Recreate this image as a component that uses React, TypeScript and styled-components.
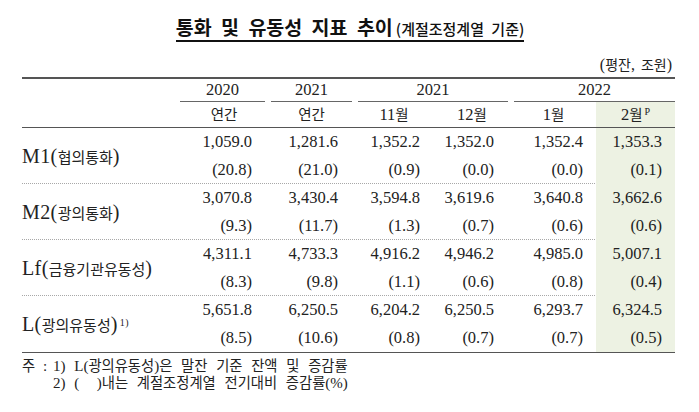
import React from "react";
import styled, { createGlobalStyle } from "styled-components";

const GlobalStyle = createGlobalStyle`
  html, body { margin: 0; padding: 0; background: #ffffff; }
  body {
    font-family: "Liberation Serif", "Noto Sans CJK KR", serif;
    color: #222222;
  }
`;

const HANGUL = /([\u1100-\u11FF\u3130-\u318F\uAC00-\uD7AF]+)/;

const Hangul = styled.span`
  font-family: "Noto Sans CJK KR", sans-serif;
  font-size: var(--ko, 14.5px);
  letter-spacing: 0;
`;

function mixed(text: string) {
  return text
    .split(HANGUL)
    .map((part, i) =>
      HANGUL.test(part) ? <Hangul key={i}>{part}</Hangul> : <React.Fragment key={i}>{part}</React.Fragment>
    );
}

const COLS = "158px 88px 87px 78px 78px 85px 79px";
const PADS = [16, 17, 13, 17, 13, 13];
const HL = "#edf2e3";
const RULE = "#555555";

const Page = styled.div`
  width: 699px;
  height: 412px;
  box-sizing: border-box;
  padding: 16px 24px 0 22px;
  overflow: hidden;
`;

const TitleRow = styled.div`
  text-align: center;
  padding-left: 3px;
`;

const TitleLine = styled.h1`
  display: inline-block;
  margin: 0;
  font-family: "Noto Sans CJK KR", sans-serif;
  font-weight: 700;
  font-size: 19.5px;
  line-height: 22px;
  word-spacing: 5px;
  color: #111111;
  border-bottom: 2px solid #111111;
`;

const TitleSub = styled.span`
  font-size: 15px;
  font-weight: 500;
  word-spacing: 4px;
  margin-left: 3px;
`;

const Unit = styled.div`
  --ko: 14px;
  margin-top: 13px;
  padding-right: 3px;
  text-align: right;
  font-size: 16px;
  line-height: 18px;
  word-spacing: 2px;
`;

const Table = styled.div`
  margin-top: 3px;
  border-top: 2px solid ${RULE};
  border-bottom: 1.5px solid ${RULE};
  font-size: 16.5px;
  --ko: 14.5px;
`;

const HeadTop = styled.div`
  display: grid;
  grid-template-columns: ${COLS};
  height: 23px;
`;

const Blank = styled.div``;

const YearGroup = styled.div<{ $span: number; $first?: boolean; $last?: boolean }>`
  grid-column: span ${(p) => p.$span};
  margin: 0 ${(p) => (p.$last ? 0 : 3)}px 0 ${(p) => (p.$first ? 0 : 3)}px;
  border-bottom: 1.5px solid #666666;
  display: flex;
  align-items: center;
  justify-content: center;
  line-height: 1;
`;

const HeadSub = styled.div`
  display: grid;
  grid-template-columns: ${COLS};
  height: 26px;
  box-sizing: border-box;
  border-bottom: 1.5px solid ${RULE};
`;

const SubHead = styled.div<{ $hl?: boolean }>`
  display: flex;
  align-items: center;
  justify-content: center;
  background: ${(p) => (p.$hl ? HL : "transparent")};
  padding-bottom: 1px;
`;

const Sup = styled.sup`
  font-family: "Liberation Serif", serif;
  font-size: 10px;
  line-height: 0;
  vertical-align: 0;
  position: relative;
  top: -0.55em;
  margin-left: 2px;
`;

const Block = styled.div<{ $last?: boolean }>`
  display: grid;
  grid-template-columns: ${COLS};
  grid-template-rows: 28px 28px;
  box-sizing: border-box;
  height: 56px;
  border-bottom: ${(p) => (p.$last ? "none" : "1px dotted #a8a8a8")};
`;

const Label = styled.div`
  grid-row: span 2;
  align-self: center;
  font-size: 20px;
  letter-spacing: 0.4px;
  --ko: 15px;
  padding-top: 1px;
`;

const Num = styled.div<{ $pad: number; $hl?: boolean }>`
  text-align: right;
  padding-right: ${(p) => p.$pad}px;
  line-height: 28px;
  background: ${(p) => (p.$hl ? HL : "transparent")};
`;

const Notes = styled.div`
  display: flex;
  margin-top: 4px;
  font-size: 15px;
  line-height: 15px;
  --ko: 14.3px;
`;

const NoteLabel = styled.div`
  width: 31px;
  flex: none;
  word-spacing: 4px;
`;

const NoteLines = styled.div`
  display: flex;
  flex-direction: column;
  word-spacing: 5px;
  white-space: pre;
`;

type Row = { label: string; sup?: string; v: string[]; p: string[] };

const ROWS: Row[] = [
  {
    label: "M1(협의통화)",
    v: ["1,059.0", "1,281.6", "1,352.2", "1,352.0", "1,352.4", "1,353.3"],
    p: ["(20.8)", "(21.0)", "(0.9)", "(0.0)", "(0.0)", "(0.1)"],
  },
  {
    label: "M2(광의통화)",
    v: ["3,070.8", "3,430.4", "3,594.8", "3,619.6", "3,640.8", "3,662.6"],
    p: ["(9.3)", "(11.7)", "(1.3)", "(0.7)", "(0.6)", "(0.6)"],
  },
  {
    label: "Lf(금융기관유동성)",
    v: ["4,311.1", "4,733.3", "4,916.2", "4,946.2", "4,985.0", "5,007.1"],
    p: ["(8.3)", "(9.8)", "(1.1)", "(0.6)", "(0.8)", "(0.4)"],
  },
  {
    label: "L(광의유동성)",
    sup: "1)",
    v: ["5,651.8", "6,250.5", "6,204.2", "6,250.5", "6,293.7", "6,324.5"],
    p: ["(8.5)", "(10.6)", "(0.8)", "(0.7)", "(0.7)", "(0.5)"],
  },
];

const SUBS = ["연간", "연간", "11월", "12월", "1월", "2월"];

export default function App() {
  return (
    <>
      <GlobalStyle />
      <Page>
        <TitleRow>
          <TitleLine>
            통화 및 유동성 지표 추이<TitleSub>(계절조정계열 기준)</TitleSub>
          </TitleLine>
        </TitleRow>
        <Unit>{mixed("(평잔, 조원)")}</Unit>
        <Table>
          <HeadTop>
            <Blank />
            <YearGroup $span={1} $first>2020</YearGroup>
            <YearGroup $span={1}>2021</YearGroup>
            <YearGroup $span={2}>2021</YearGroup>
            <YearGroup $span={2} $last>2022</YearGroup>
          </HeadTop>
          <HeadSub>
            <Blank />
            {SUBS.map((s, i) => (
              <SubHead key={i} $hl={i === 5}>
                <span>
                  {mixed(s)}
                  {i === 5 && <Sup>P</Sup>}
                </span>
              </SubHead>
            ))}
          </HeadSub>
          {ROWS.map((r, ri) => (
            <Block key={ri} $last={ri === ROWS.length - 1}>
              <Label>
                {mixed(r.label)}
                {r.sup && <Sup>{r.sup}</Sup>}
              </Label>
              {r.v.map((v, i) => (
                <Num key={"v" + i} $pad={PADS[i]} $hl={i === 5}>
                  {v}
                </Num>
              ))}
              {r.p.map((v, i) => (
                <Num key={"p" + i} $pad={PADS[i]} $hl={i === 5}>
                  {v}
                </Num>
              ))}
            </Block>
          ))}
        </Table>
        <Notes>
          <NoteLabel>{mixed("주 :")}</NoteLabel>
          <NoteLines>
            <div>{mixed("1) L(광의유동성)은 말잔 기준 잔액 및 증감률")}</div>
            <div>{mixed("2) (  )내는 계절조정계열 전기대비 증감률(%)")}</div>
          </NoteLines>
        </Notes>
      </Page>
    </>
  );
}
